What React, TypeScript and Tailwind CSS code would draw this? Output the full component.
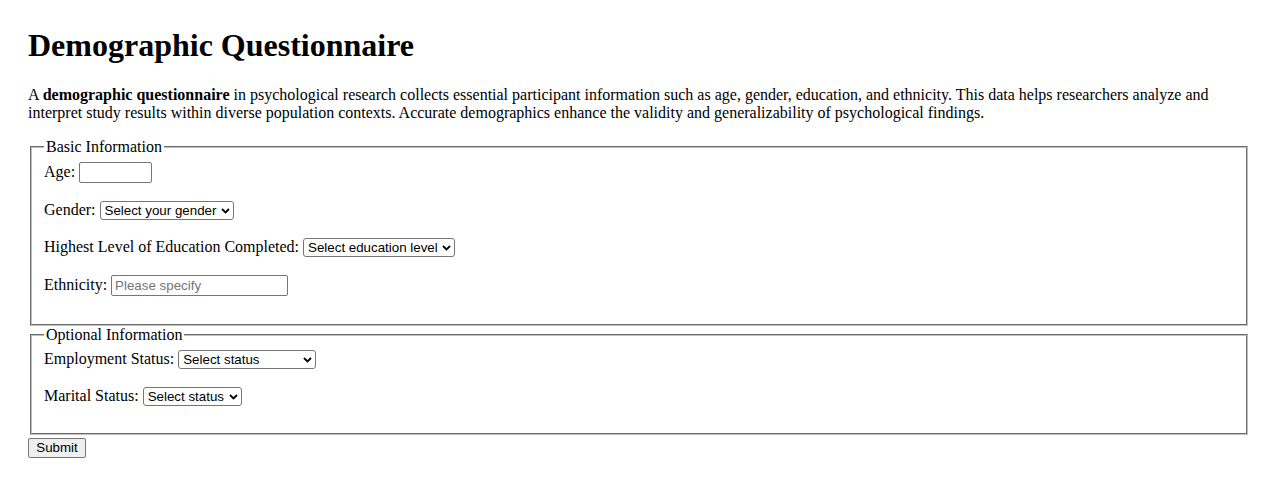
function Chevron() {
  return (
    <svg
      width="9"
      height="6"
      viewBox="0 0 9 6"
      className="pointer-events-none absolute right-[4px] top-1/2 -translate-y-1/2"
    >
      <path d="M1 1 L4.5 4.5 L8 1" fill="none" stroke="#000" strokeWidth="1.8" />
    </svg>
  );
}

function Select({ width, placeholder }: { width: string; placeholder: string }) {
  return (
    <span className="relative inline-flex">
      <select
        className={`h-[19px] ${width} appearance-none rounded-[3px] border border-[#767676] bg-white pl-[4px] pr-[16px] font-['Liberation_Sans',Arial,sans-serif] text-[13.33px] leading-[15px] text-black`}
        defaultValue=""
      >
        <option value="">{placeholder}</option>
      </select>
      <Chevron />
    </span>
  );
}

function TextInput({ width, placeholder }: { width: string; placeholder?: string }) {
  return (
    <input
      type="text"
      placeholder={placeholder}
      className={`h-[21px] ${width} rounded-[2px] border border-[#767676] bg-white px-[3px] font-['Liberation_Sans',Arial,sans-serif] text-[13.33px] text-black placeholder:text-[#757575]`}
    />
  );
}

function Row({ label, children }: { label: string; children: React.ReactNode }) {
  return (
    <div className="flex items-baseline gap-[4px]">
      <label className="leading-[18.4px]">{label}</label>
      {children}
    </div>
  );
}

export default function App() {
  return (
    <div className="min-h-screen bg-white px-[28px] pt-[27px] font-['Liberation_Serif','Times_New_Roman',serif] text-[16px] text-black">
      <h1 className="text-[32px] font-bold leading-[36.8px]">Demographic Questionnaire</h1>

      <p className="mt-[22px] leading-[18.4px]">
        A <strong className="font-bold">demographic questionnaire</strong> in psychological research
        collects essential participant information such as age, gender, education, and ethnicity.
        This data helps researchers analyze and interpret study results within diverse population
        contexts. Accurate demographics enhance the validity and generalizability of psychological
        findings.
      </p>

      <form className="mt-[15px]">
        <fieldset className="mx-[2px] border-2 border-[#c0c0c0] px-[12px] pb-[28px] pt-[6px] [border-style:groove]">
          <legend className="px-[2px] leading-[18.4px]">Basic Information</legend>
          <div className="flex flex-col gap-[18px]">
            <Row label="Age:">
              <TextInput width="w-[73px]" />
            </Row>
            <Row label="Gender:">
              <Select width="w-[134px]" placeholder="Select your gender" />
            </Row>
            <Row label="Highest Level of Education Completed:">
              <Select width="w-[152px]" placeholder="Select education level" />
            </Row>
            <Row label="Ethnicity:">
              <TextInput width="w-[177px]" placeholder="Please specify" />
            </Row>
          </div>
        </fieldset>

        <fieldset className="mx-[2px] border-2 border-[#c0c0c0] px-[12px] pb-[27px] pt-[6px] [border-style:groove]">
          <legend className="px-[2px] leading-[18.4px]">Optional Information</legend>
          <div className="flex flex-col gap-[18px]">
            <Row label="Employment Status:">
              <Select width="w-[138px]" placeholder="Select status" />
            </Row>
            <Row label="Marital Status:">
              <Select width="w-[99px]" placeholder="Select status" />
            </Row>
          </div>
        </fieldset>

        <button
          type="submit"
          className="h-[20px] w-[58px] rounded-[2px] border border-[#767676] bg-[#efefef] font-['Liberation_Sans',Arial,sans-serif] text-[13.33px] leading-[15px] text-black"
        >
          Submit
        </button>
      </form>
    </div>
  );
}
